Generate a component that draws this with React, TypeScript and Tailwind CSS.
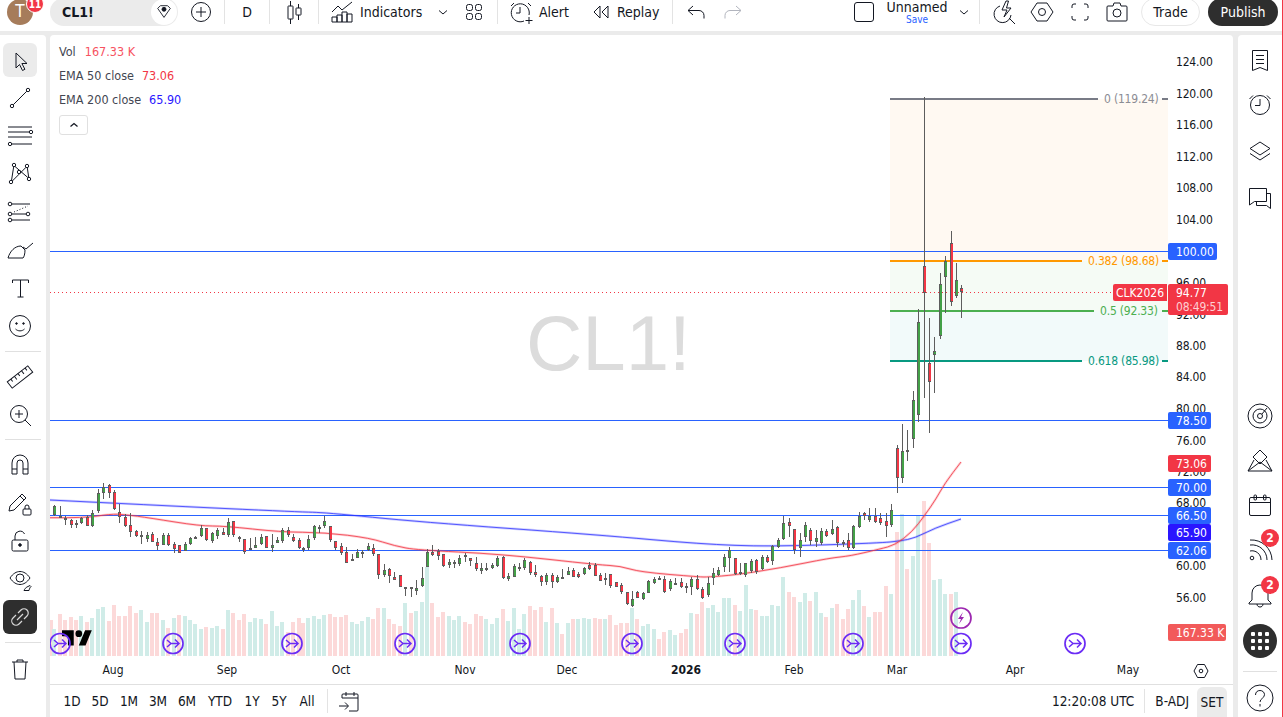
import React from "react";

type C = "g" | "r";
const A: [number, number, number, number, C][] = [
[505,506,515,516,"g"],[506,516,518,518,"r"],[516,518,519,525,"g"],[519,520,525,528,"r"],[520,523,525,528,"g"],[517,518,523,524,"g"],[515,517,526,526,"r"],[510,513,526,527,"g"],[489,493,511,513,"g"],[483,487,493,499,"g"],[484,485,493,498,"r"],[490,492,509,510,"r"],[504,512,517,523,"r"],[514,517,526,527,"r"],[513,525,532,537,"r"],[530,531,536,537,"r"],[531,535,536,544,"g"],[532,535,539,542,"g"],[532,534,542,542,"r"],[538,542,546,550,"r"],[533,535,545,545,"g"],[533,535,545,546,"r"],[542,544,549,553,"r"],[545,545,553,553,"r"],[542,544,551,551,"g"],[537,538,544,545,"g"],[536,537,538,539,"g"],[525,528,536,537,"g"],[528,528,540,541,"r"],[532,533,541,543,"g"],[528,530,536,539,"g"],[528,532,535,535,"r"],[518,522,535,537,"g"],[521,521,535,537,"r"],[536,537,539,542,"r"],[539,539,552,554,"r"],[538,548,550,550,"g"],[537,545,548,548,"g"],[534,537,544,545,"g"],[536,536,548,548,"r"],[534,545,548,552,"g"],[537,540,543,543,"g"],[528,530,541,543,"g"],[527,530,535,537,"r"],[534,537,541,542,"r"],[538,540,548,549,"r"],
];
const B: [number, number, number, number, number, C][] = [
[303,230,235,236,245,"g"],[308,195,208,235,240,"g"],[314,166,168,205,210,"g"],[319,165,172,174,190,"g"],[324,138,153,167,175,"g"],[330,168,168,210,215,"r"],[335,212,212,233,240,"r"],[341,220,228,248,255,"r"],[346,230,245,278,278,"r"],[352,253,268,272,273,"g"],[357,237,247,263,265,"g"],[362,240,245,246,265,"g"],[368,220,228,241,243,"g"],[373,222,235,253,258,"r"],[378,252,252,315,328,"r"],[384,283,300,314,320,"g"],[389,295,297,318,340,"r"],[394,305,322,329,330,"r"],[400,315,315,350,352,"r"],[405,350,352,353,378,"g"],[411,350,352,358,382,"r"],[416,330,355,362,375,"g"],[422,292,325,348,350,"g"],[427,238,247,290,292,"g"],[432,225,245,255,258,"r"],[438,238,243,257,270,"r"],[443,253,253,288,292,"r"],[449,268,277,285,293,"g"],[454,270,275,283,295,"g"],[459,255,265,281,288,"g"],[465,250,255,262,275,"r"],[470,264,265,274,288,"r"],[476,262,278,298,302,"r"],[481,280,294,302,313,"g"],[486,280,295,296,303,"g"],[492,280,286,294,298,"g"],[497,257,265,287,290,"g"],[503,258,260,325,327,"r"],[508,310,318,327,332,"g"],[514,282,287,320,322,"g"],[519,280,290,291,302,"g"],[524,265,270,295,300,"g"],[530,272,276,308,316,"r"],[535,285,305,315,320,"r"],[541,315,317,335,348,"r"],[546,310,315,335,345,"g"],[552,310,315,335,355,"r"],[557,315,320,335,338,"g"],[562,297,322,323,325,"g"],[568,290,303,314,316,"g"],[573,295,300,320,322,"r"],[578,305,313,321,325,"r"],[584,290,294,311,315,"g"],[589,275,285,297,300,"r"],[595,280,285,317,319,"r"],[600,308,315,332,334,"r"],[605,310,324,326,345,"g"],[610,312,312,348,355,"r"],[616,335,337,350,352,"r"],[621,340,345,365,372,"r"],[627,365,367,403,405,"r"],[632,363,388,407,410,"g"],[637,363,365,383,385,"r"],[643,365,370,388,390,"g"],[648,330,333,368,370,"g"],[654,322,327,338,342,"g"],[659,318,323,325,330,"g"],[664,318,327,365,368,"r"],[670,328,333,358,362,"g"],[675,325,338,342,345,"r"],[681,325,337,350,353,"r"],[686,338,349,351,368,"g"],[691,322,327,350,375,"g"],[697,315,327,357,360,"r"],[702,350,357,384,388,"r"],[708,320,340,375,382,"g"],[713,295,310,325,345,"g"],[718,290,300,315,318,"g"],[724,252,262,290,305,"g"],[729,232,240,263,305,"g"],[735,265,265,313,315,"r"],[740,280,305,307,315,"g"],[745,278,280,315,320,"g"],[751,268,273,302,310,"g"],[756,268,270,305,312,"r"],[762,255,262,297,300,"g"],[767,255,260,275,278,"r"],[772,225,228,272,284,"g"],[778,205,210,230,235,"g"],[783,138,160,207,210,"g"],[789,145,157,167,200,"r"],[794,177,177,240,253,"r"],[800,190,210,235,260,"g"],[805,155,165,200,215,"g"],[810,175,180,213,225,"r"],[816,180,205,215,232,"g"],[821,175,183,218,225,"g"],[826,178,183,197,200,"r"],[832,150,178,191,195,"g"],[837,168,171,220,232,"r"],[843,210,215,217,232,"g"],[848,190,210,235,240,"r"],[853,166,168,235,238,"g"],[859,125,137,172,175,"g"],[864,125,130,137,150,"r"],[869,113,138,150,155,"g"],[875,115,138,155,158,"r"],[880,130,145,160,165,"r"],[886,130,153,167,200,"r"],[891,102,120,165,170,"g"],
];
const D: [number, number, number, number, number, C][] = [
[897,445,448,478,493,"r"],[902,424,451,478,483,"g"],[907,430,450,451,461,"g"],[913,391,400,439,448,"g"],[918,309,322,415,422,"g"],[924,97,266,293,398,"r"],[929,318,363,382,433,"r"],[934,337,351,355,393,"g"],[940,273,284,336,339,"g"],[945,256,261,277,313,"g"],[951,231,243,302,306,"r"],[956,263,280,296,298,"g"],[961,285,288,292,318,"r"],
];
const toY = (z: number) => 470 + z / 3;
const candles = [
  ...A.map((c, i) => [Math.round(54.3 + 5.43 * i), c[0], c[1], c[2], c[3], c[4]] as const),
  ...B.map((c) => [c[0], toY(c[1]), toY(c[2]), toY(c[3]), toY(c[4]), c[5]] as const),
  ...D,
].map((c) => ({ x: c[0], h: Math.round(c[1]), t: Math.round(c[2]), b: Math.round(c[3]), l: Math.round(c[4]), c: c[5] as C }));

const volA: [number, C][] = [[627,"g"],[582,"r"],[600,"r"],[590,"r"],[600,"r"],[587,"g"],[605,"r"],[595,"g"],[567,"g"],[561,"g"],[603,"r"],[555,"r"],[588,"r"],[588,"r"],[558,"r"],[578,"r"],[570,"g"],[605,"g"],[579,"r"],[579,"r"],[600,"g"],[624,"r"],[595,"g"],[585,"r"],[588,"g"],[600,"g"],[613,"g"],[627,"g"],[621,"r"],[624,"g"],[618,"g"],[627,"r"],[570,"g"],[578,"r"],[600,"r"],[582,"r"],[606,"g"],[594,"g"],[597,"g"],[612,"r"],[573,"g"],[618,"g"],[606,"g"],[636,"r"],[606,"r"],[594,"r"]];
const volB: [number, number, C][] = [[303,460,"r"],[308,443,"g"],[314,437,"g"],[319,447,"g"],[324,435,"g"],[330,432,"r"],[335,441,"r"],[341,441,"r"],[346,435,"r"],[352,456,"g"],[357,461,"g"],[362,453,"g"],[368,441,"g"],[373,447,"r"],[378,414,"r"],[384,414,"g"],[389,447,"r"],[394,461,"r"],[400,468,"r"],[405,399,"g"],[411,428,"r"],[416,423,"g"],[422,396,"g"],[427,290,"g"],[432,399,"r"],[438,441,"r"],[443,426,"r"],[449,438,"g"],[454,450,"g"],[459,438,"g"],[465,456,"r"],[470,461,"r"],[476,432,"r"],[481,438,"r"],[486,447,"g"],[492,462,"g"],[497,444,"g"],[503,417,"r"],[508,453,"g"],[514,414,"g"],[519,477,"g"],[524,432,"g"],[530,408,"r"],[535,420,"r"],[541,411,"r"],[546,456,"g"],[552,414,"r"],[557,459,"g"],[562,492,"r"],[568,459,"g"],[573,447,"r"],[578,447,"g"],[584,444,"g"],[589,447,"g"],[595,444,"r"],[600,447,"r"],[605,447,"g"],[610,435,"r"],[616,465,"r"],[621,459,"r"],[627,459,"r"],[632,414,"g"],[637,447,"r"],[643,468,"g"],[648,462,"g"],[654,477,"g"],[659,507,"r"],[664,486,"r"],[670,480,"g"],[675,495,"g"],[681,489,"r"],[686,477,"r"],[691,429,"g"],[697,432,"r"],[702,396,"r"],[708,414,"g"],[713,405,"g"],[718,426,"g"],[724,384,"g"],[729,384,"g"],[735,405,"r"],[740,423,"g"],[746,345,"g"],[751,417,"g"],[756,420,"r"],[762,438,"g"],[767,438,"g"],[772,405,"g"],[778,408,"g"],[783,321,"g"],[789,366,"r"],[794,381,"r"],[800,396,"g"],[805,369,"g"],[810,393,"r"],[816,366,"g"],[821,429,"g"],[826,441,"r"],[832,414,"g"],[837,402,"r"],[843,447,"r"],[848,417,"r"],[853,390,"g"],[859,360,"g"],[864,408,"r"],[869,441,"g"],[875,426,"r"]];
const volC: [number, number, C][] = [[880,365,"r"],[886,288,"r"],[891,312,"g"],[897,126,"r"],[902,72,"g"],[907,237,"r"],[913,198,"g"],[918,78,"g"],[924,33,"r"],[929,159,"r"],[934,270,"g"],[940,267,"g"],[945,312,"g"],[951,312,"r"],[956,306,"g"]];
const vols = [
  { x: 49, y: 620, c: "r" as C },
  ...volA.map((v, i) => ({ x: Math.round(54.3 + 5.43 * i), y: 420 + v[0] / 3, c: v[1] })),
  ...volB.map((v) => ({ x: v[0], y: toY(v[1]), c: v[2] })),
  ...volC.map((v) => ({ x: v[0], y: 490 + v[1] / 3, c: v[2] })),
];

function smooth(p: [number, number][]) {
  let d = `M${p[0][0]} ${p[0][1]}`;
  for (let i = 1; i < p.length - 1; i++) {
    const mx = (p[i][0] + p[i + 1][0]) / 2;
    const my = (p[i][1] + p[i + 1][1]) / 2;
    d += ` Q${p[i][0]} ${p[i][1]} ${mx} ${my}`;
  }
  const l = p[p.length - 1];
  return d + ` L${l[0]} ${l[1]}`;
}
const ema50 = smooth([[50,517.7],[85,518],[110,514],[125,514.5],[150,518],[200,526],[225,526],[280,532],[325,532.5],[370,538],[395,546],[417,550],[500,554],[600,565],[620,566],[640,572],[700,577],[708,577],[735,575],[780,568],[830,558],[850,556],[880,549],[895,545],[912,532],[925,515],[936,499],[945,483],[961,462]]);
const ema200 = smooth([[50,500],[150,505],[300,512],[325,512.5],[420,522],[600,535],[700,544],[770,546.7],[880,543],[900,541],[915,538],[935,528],[961,519]]);

const priceTicks: [string, number][] = [["124.00",62],["120.00",94],["116.00",125],["112.00",157],["108.00",188],["104.00",220],["96.00",283],["92.00",315],["88.00",346],["84.00",377],["80.00",409],["76.00",441],["72.00",472],["68.00",503],["60.00",566],["56.00",598]];
const timeTicks: [string, number, boolean][] = [["Aug",113,false],["Sep",227,false],["Oct",341,false],["Nov",465,false],["Dec",567,false],["2026",686,true],["Feb",794,false],["Mar",897,false],["Apr",1015,false],["May",1128,false]];
const hLevels = [251, 420, 487, 515, 550];
const tags: [string, number, number, string][] = [["100.00",243,49,"bg-[#2962ff]"],["78.50",412,43,"bg-[#2962ff]"],["73.06",455,43,"bg-[#f23645]"],["70.00",479,43,"bg-[#2962ff]"],["66.50",507,43,"bg-[#2962ff]"],["65.90",524,43,"bg-[#2a16ff]"],["62.06",542,43,"bg-[#2962ff]"],["167.33 K",624,58,"bg-[#f25a5a]"]];
const fibs: [string, number, number, number, string, string][] = [
  ["0 (119.24)",99,1098,1104,"#787b86","text-[#8a8c94]"],
  ["0.382 (98.68)",261,1082,1088,"#ff9800","text-[#ff9800]"],
  ["0.5 (92.33)",311,1094,1100,"#4caf50","text-[#4caf50]"],
  ["0.618 (85.98)",361,1082,1088,"#089981","text-[#089981]"],
];
const arrows = [60, 173, 292, 405, 520, 632, 735, 853, 961, 1075];
const ranges = [["1D",28],["5D",28],["1M",30],["3M",28],["6M",30],["YTD",36],["1Y",28],["5Y",26],["All",30]] as const;

function Ic({ children, className = "" }: { children: React.ReactNode; className?: string }) {
  return (
    <svg width="28" height="28" viewBox="0 0 28 28" fill="none" stroke="currentColor" strokeWidth="1" className={"shrink-0 " + className}>
      {children}
    </svg>
  );
}

const left: { k: string; n: React.ReactNode }[] = [
  { k: "cursor", n: <path d="M10 7v15l3.500-3.500 3 6 2.400-1.200-3-5.800H21z" /> },
  { k: "line", n: <><circle cx="6" cy="22" r="1.700" /><circle cx="22" cy="6" r="1.700" /><path d="M7.200 20.800 20.800 7.200" /></> },
  { k: "hl", n: <><path d="M2 5h24M2 10h21M2 15h24M6 22h20" /><circle cx="25" cy="10" r="1.700" /><circle cx="4" cy="22" r="1.700" /></> },
  { k: "pat", n: <><circle cx="5" cy="22" r="1.700" /><circle cx="8" cy="5" r="1.700" /><circle cx="13" cy="12" r="1.700" /><circle cx="21" cy="6" r="1.700" /><circle cx="23" cy="19" r="1.700" /><path d="M5.500 20.500 7.700 6.700M9 6.500l12.800 11M20 7.300 6.300 21M21.300 7.700 22.700 17.300" /></> },
  { k: "fork", n: <><circle cx="4" cy="6" r="1.800" /><circle cx="4" cy="16" r="1.800" /><circle cx="4" cy="22" r="1.800" /><circle cx="22" cy="16" r="1.800" /><path d="M6 6h18M6 16h14M6 22h18" /><path d="M8 14 22 8" strokeDasharray="1 2" /></> },
  { k: "brush", n: <><path d="M2 22h15M2 22C4 15 9 10 15 10l4 4c0 4-1 7-2 8" /><path d="M17 11l3 2 7-6" /></> },
  { k: "text", n: <path d="M7 9V6h16v3M15 6v17M12 23h6" transform="translate(-.5 0)" /> },
  { k: "smile", n: <><circle cx="14" cy="14" r="10.500" /><circle cx="10.500" cy="11.500" r=".8" fill="currentColor" /><circle cx="17.500" cy="11.500" r=".8" fill="currentColor" /><path d="M9.500 17c2.500 2.500 6.500 2.500 9 0" /></> },
  { k: "sep1", n: null },
  { k: "ruler", n: <g transform="rotate(-38 14 14)"><rect x="1" y="10" width="26" height="8" /><path d="M5.500 10v3M10 10v4M14.500 10v3M19 10v4M23.500 10v3" /></g> },
  { k: "zoom", n: <><circle cx="13" cy="13" r="8.500" /><path d="M13 9v8M9 13h8M19 19l6 6" /></> },
  { k: "sep2", n: null },
  { k: "magnet", n: <path d="M6 23v-11a8 8 0 0 1 16 0v11h-5v-11a3 3 0 0 0-6 0v11zM6 18h5M17 18h5" /> },
  { k: "pencil", n: <><path d="M3 22l1-5 12-12 4 4-12 12zM14 7l4 4" /><rect x="17" y="20" width="8" height="6" rx="1" /><path d="M19 20v-2a2 2 0 0 1 4 0v2" /></> },
  { k: "lock", n: <><rect x="6" y="13" width="16" height="11" rx="1.500" /><path d="M9 13V9a5 5 0 0 1 9.500-2" /><circle cx="14" cy="18" r="1.300" fill="currentColor" /></> },
  { k: "eye", n: <><path d="M4 13c3-4.500 6.500-6.500 10-6.500S21 8.500 24 13c-3 4.500-6.500 6.500-10 6.500S7 17.500 4 13z" /><circle cx="14" cy="13" r="4" /><path d="M18 25.500h5c.5-2 1-3 2-4l-1-1-3 1.500c-1 .5-2.500 2-3 3.500z" /></> },
];

function LeftBar() {
  return (
    <div className="w-[46px] shrink-0 bg-white rounded-tr-[4px] flex flex-col pt-[6px] text-[#131722]">
      {left.map((it) =>
        it.n === null ? (
          <div key={it.k} className="h-[12.5px] flex items-center justify-center"><div className="w-[36px] h-px bg-[#e0e0e0]" /></div>
        ) : (
          <div key={it.k} className={"h-[34px] w-[34px] mx-[3px] my-[2px] flex items-center justify-center rounded-[6px] " + (it.k === "cursor" ? "bg-[#ebebeb]" : "")}>
            <Ic>{it.n}</Ic>
          </div>
        )
      )}
      <div className="h-[34px] w-[34px] mx-[3px] my-[2px] flex items-center justify-center rounded-[6px] bg-[#2e2e2e] text-[#d8d8d8]">
        <Ic><path d="M12 10l3-3a4 4 0 0 1 6 6l-3 3M16 18l-3 3a4 4 0 0 1-6-6l3-3M11 17l6-6" strokeWidth="1.200" /></Ic>
      </div>
      <div className="h-[12.5px] flex items-center justify-center"><div className="w-[36px] h-px bg-[#e0e0e0]" /></div>
      <div className="h-[34px] w-[34px] mx-[3px] my-[2px] flex items-center justify-center">
        <Ic><path d="M6 8h16M11 8V6h6v2M8 8l1 17h10l1-17" /></Ic>
      </div>
    </div>
  );
}

function Sep() {
  return <div className="w-px h-[24px] bg-[#e3e3e3] shrink-0" />;
}

function TopBar() {
  return (
    <div className="h-[31px] shrink-0 bg-white flex items-center pb-[7px] text-[14px] text-[#131722] whitespace-nowrap">
      <div className="relative ml-[7px] w-[26px] h-[26px] shrink-0 rounded-full bg-[#a67c5b] flex items-center justify-center text-white text-[17px]">
        T
        <div className="absolute left-[19px] -top-[4px] w-[18px] h-[18px] rounded-full bg-[#f23645] border border-white flex items-center justify-center text-[10px] font-bold">11</div>
      </div>
      <div className="ml-[17px] w-[128px] h-[28px] shrink-0 rounded-full bg-[#ebebeb] flex items-center justify-between pl-[12px] pr-[1px]">
        <span className="font-bold">CL1!</span>
        <div className="w-[26px] h-[26px] rounded-full bg-white flex items-center justify-center">
          <Ic className="scale-[.9]"><path d="M7 10l3-3h8l3 3-7 10z" /><circle cx="14" cy="11" r="2.200" fill="currentColor" /></Ic>
        </div>
      </div>
      <div className="w-[46px] flex justify-center shrink-0">
        <Ic><circle cx="14" cy="14" r="9.500" /><path d="M14 9v10M9 14h10" /></Ic>
      </div>
      <Sep />
      <div className="w-[44px] text-center shrink-0">D</div>
      <Sep />
      <div className="w-[48px] flex justify-center shrink-0">
        <Ic><path d="M10.500 3v5M10.500 21v5M18.500 6v4M18.500 17v5" /><rect x="8" y="8" width="5" height="13" rx=".5" /><rect x="16" y="10" width="5" height="7" rx=".5" /></Ic>
      </div>
      <Sep />
      <div className="ml-[10px] shrink-0 w-[28px]">
        <Ic><path d="M3 14l6-6 4 4 10-8" /><path d="M3 24v-5h5v5zM8 24v-7h5v7zM13 24v-10h5v10zM18 24v-8h5v8z" /></Ic>
      </div>
      <span className="ml-[3px] w-[61px] shrink-0">Indicators</span>
      <svg width="16" height="16" viewBox="0 0 16 16" fill="none" stroke="currentColor" className="ml-[14px] shrink-0"><path d="M4 6.500l4 3.500 4-3.500" /></svg>
      <div className="ml-[9px] w-[28px] shrink-0">
        <Ic><rect x="6.500" y="6.500" width="6" height="6" rx="2" /><rect x="15.500" y="6.500" width="6" height="6" rx="2" /><rect x="6.500" y="15.500" width="6" height="6" rx="2" /><rect x="15.500" y="15.500" width="6" height="6" rx="2" /></Ic>
      </div>
      <div className="ml-[9px]"><Sep /></div>
      <div className="ml-[9px] w-[28px] shrink-0">
        <Ic><path d="M17 23a9 9 0 1 1 5-6M13 9v6h-4M4 8l3-3M24 8l-3-3M22 19v7M18.500 22.500h7" /></Ic>
      </div>
      <span className="ml-[4px] w-[31px] shrink-0">Alert</span>
      <div className="ml-[17px] w-[28px] shrink-0">
        <Ic><path d="M13 8l-6 6 6 6zM21 8l-6 6 6 6z" /></Ic>
      </div>
      <span className="ml-[2px] w-[41px] shrink-0">Replay</span>
      <div className="ml-[14px]"><Sep /></div>
      <div className="ml-[9px] w-[28px] shrink-0">
        <Ic><path d="M11 8l-5 4.500 5 4.500M6 12.500h11a5 5 0 0 1 5 5v3" /></Ic>
      </div>
      <div className="ml-[9px] w-[28px] shrink-0 text-[#b2b5be]">
        <Ic><path d="M17 8l5 4.500-5 4.500M22 12.500H11a5 5 0 0 0-5 5v3" /></Ic>
      </div>
      <div className="flex-1" />
      <div className="w-[20px] h-[20px] rounded-[3px] border border-[#131722] shrink-0" />
      <div className="ml-[14px] w-[58px] shrink-0 flex flex-col items-center">
        <span className="text-[14px] leading-[15px]">Unnamed</span>
        <span className="text-[10px] leading-[10px] text-[#2962ff]">Save</span>
      </div>
      <svg width="16" height="16" viewBox="0 0 16 16" fill="none" stroke="currentColor" className="ml-[10px] shrink-0"><path d="M4 6.500l4 3.500 4-3.500" /></svg>
      <div className="ml-[7px]"><Sep /></div>
      <div className="ml-[10px] w-[28px] shrink-0">
        <Ic><path d="M10 8a8.500 8.500 0 1 0 11 9M19 20l6 6" /><path d="M16 3l-4 9h5l-3 7 7-9h-4.500l2-7z" /></Ic>
      </div>
      <div className="ml-[10px] w-[28px] shrink-0">
        <Ic><path d="M9 5h10l6 9-6 9H9l-6-9z" /><circle cx="14" cy="14" r="3.500" /></Ic>
      </div>
      <div className="ml-[10px] w-[28px] shrink-0">
        <Ic><path d="M10 6H8a2 2 0 0 0-2 2v2M18 6h2a2 2 0 0 1 2 2v2M10 22H8a2 2 0 0 1-2-2v-2M18 22h2a2 2 0 0 0 2-2v-2" /></Ic>
      </div>
      <div className="ml-[9px] w-[28px] shrink-0">
        <Ic><path d="M5 8h5l1-3h6l1 3h5a1 1 0 0 1 1 1v13a1 1 0 0 1-1 1H5a1 1 0 0 1-1-1V9a1 1 0 0 1 1-1z" /><circle cx="14" cy="15" r="4" /></Ic>
      </div>
      <div className="ml-[10px] w-[59px] h-[28px] shrink-0 rounded-full border border-[#e8e8e8] flex items-center justify-center">Trade</div>
      <div className="ml-[8px] mr-[4px] w-[70px] h-[28px] shrink-0 rounded-full bg-[#2e2e2e] text-white flex items-center justify-center">Publish</div>
    </div>
  );
}

function ChartSvg() {
  return (
    <svg width="1183" height="650" viewBox="50 35 1183 650" className="absolute left-0 top-0">
      <g shapeRendering="crispEdges">
        <rect x="890" y="99" width="278" height="162" fill="#fff9f2" />
        <rect x="890" y="261" width="278" height="50" fill="#f5fbf5" />
        <rect x="890" y="311" width="278" height="50" fill="#f2fafa" />
        {vols.map((v, i) => (
          <rect key={i} x={Math.max(50, v.x - 2)} y={v.y} width={v.x < 52 ? 3 : 4} height={656 - v.y} fill={v.c === "g" ? "#d0ece8" : "#fcd9d9"} />
        ))}
        {hLevels.map((y) => <rect key={y} x="50" y={y} width="1118" height="1" fill="#2962ff" />)}
        {fibs.map((f) => (
          <g key={f[0]}>
            <rect x="890" y={f[1] - 1} width={f[2] - 890} height="2" fill={f[4]} />
            <rect x="1162" y={f[1] - 1} width="6" height="2" fill={f[4]} />
          </g>
        ))}
      </g>
      <line x1="50" y1="292.500" x2="1113" y2="292.500" stroke="#f23645" strokeDasharray="1 3" />
      <path d={ema200} fill="none" stroke="#2a2eff" strokeOpacity=".22" strokeWidth="2.500" />
      <path d={ema200} fill="none" stroke="#2a2eff" strokeOpacity=".75" strokeWidth="1" />
      <path d={ema50} fill="none" stroke="#f23645" strokeOpacity=".22" strokeWidth="2.500" />
      <path d={ema50} fill="none" stroke="#f23645" strokeOpacity=".8" strokeWidth="1" />
      <g shapeRendering="crispEdges">
        {candles.map((c, i) => (
          <g key={i}>
            <rect x={c.x} y={c.h} width="1" height={Math.max(1, c.l - c.h)} fill="#5d5d5d" />
            <rect x={c.x - 1} y={c.t} width="3" height={Math.max(2, c.b - c.t)} fill="#5d5d5d" />
            {c.b - c.t > 2 && <rect x={c.x} y={c.t + 1} width="2" height={c.b - c.t - 2} fill={c.c === "g" ? "#43a047" : "#f23645"} />}
          </g>
        ))}
      </g>
      <g transform="translate(62 627) scale(.84)">
        <path d="M14 22H7V11H0V4h14v18zM28 22h-8l7.500-18h8L28 22z" fill="#000" />
        <circle cx="20" cy="8" r="4" fill="#000" />
      </g>
      {arrows.map((x) => (
        <g key={x} fill="none" stroke="#6b2cf5">
          <circle cx={x} cy="643.500" r="10" strokeWidth="1.700" />
          <path d={`M${x - 6} ${640}l4 3.500-4 3.500M${x - 2} 643.500h8M${x + 2} 639.500l4 4-4 4`} strokeWidth="1.500" />
        </g>
      ))}
      <g fill="none">
        <circle cx="961" cy="618" r="10" stroke="#9c27b0" strokeWidth="1.700" />
        <path d="M963 612l-5 7h3l-2 5 5-7h-3z" fill="#9c27b0" />
      </g>
      <g fill="none" stroke="#131722">
        <path d="M1197.500 664.500h7l3.500 6.500-3.500 6.500h-7l-3.500-6.500z" />
        <circle cx="1201" cy="671" r="1.800" />
      </g>
    </svg>
  );
}

function Chart() {
  return (
    <div className="relative flex-1 overflow-hidden text-[12px] text-[#131722]">
      <div className="absolute left-[476px] top-[262px] font-['Liberation_Sans',sans-serif] text-[78px] leading-[92px] text-[#dcdcdc] whitespace-nowrap">CL1!</div>
      <ChartSvg />
      <div className="absolute left-[9px] top-[5px] flex flex-col text-[#434651] text-[12.5px] leading-[24px] whitespace-nowrap">
        <div className="flex gap-[9px]"><span>Vol</span><span className="text-[#f7525f]">167.33 K</span></div>
        <div className="flex gap-[8px]"><span>EMA 50 close</span><span className="text-[#f23645]">73.06</span></div>
        <div className="flex gap-[8px]"><span>EMA 200 close</span><span className="text-[#2a16ff]">65.90</span></div>
        <div className="mt-[3px] w-[29px] h-[20px] rounded-[3px] border border-[#e0e0e0] bg-white flex items-center justify-center">
          <svg width="12" height="12" viewBox="0 0 12 12" fill="none" stroke="#131722" strokeWidth="1.300"><path d="M2.500 7.500 6 4.500l3.500 3" /></svg>
        </div>
      </div>
      {fibs.map((f) => (
        <div key={f[0]} className={"absolute whitespace-nowrap leading-[16px] tracking-[-.2px] " + f[5]} style={{ left: f[3] - 50, top: f[1] - 35 - 8 }}>{f[0]}</div>
      ))}
      {priceTicks.map(([t, y]) => (
        <div key={t} className="absolute left-[1126px] leading-[16px] tracking-[-.2px]" style={{ top: y - 35 - 8 }}>{t}</div>
      ))}
      {timeTicks.map(([t, x, b]) => (
        <div key={t} className={"absolute top-[627px] w-[50px] text-center leading-[16px] " + (b ? "font-bold" : "")} style={{ left: x - 50 - 25 }}>{t}</div>
      ))}
      {tags.map(([t, y, w, bg]) => (
        <div key={t + y} className={"absolute left-[1118px] h-[17px] pl-[8px] rounded-[2px] text-white flex items-center leading-none whitespace-nowrap " + bg} style={{ top: y - 35, width: w }}>{t}</div>
      ))}
      <div className="absolute left-[1063px] top-[249px] w-[54px] h-[17px] rounded-l-[2px] bg-[#f23645] text-white flex items-center justify-center leading-none">CLK2026</div>
      <div className="absolute left-[1118px] top-[249px] w-[60px] h-[31px] pl-[8px] rounded-[2px] bg-[#f23645] text-white flex flex-col items-start justify-center leading-[14px]">
        <span>94.77</span>
        <span className="text-[#fdd0d4] tracking-[-.2px]">08:49:51</span>
      </div>
    </div>
  );
}

function BottomBar() {
  return (
    <div className="h-[33px] shrink-0 border-t border-[#e0e0e0] flex items-center text-[13.5px] text-[#131722] whitespace-nowrap pl-[8px]">
      {ranges.map(([t, w]) => (
        <div key={t} className="text-center shrink-0" style={{ width: w }}>{t}</div>
      ))}
      <div className="ml-[5px] w-px h-[24px] bg-[#e3e3e3]" />
      <div className="ml-[7px]">
        <Ic><path d="M7 11V8a1 1 0 0 1 1-1h14a1 1 0 0 1 1 1v15a1 1 0 0 1-1 1h-8M7 11h16M11 5v4M19 5v4M4 19h9M10 15.500 13.500 19 10 22.500" /></Ic>
      </div>
      <div className="flex-1" />
      <span>12:20:08 UTC</span>
      <div className="ml-[10px] w-px h-[24px] bg-[#e3e3e3]" />
      <span className="ml-[10px]">B-ADJ</span>
      <div className="ml-[8px] mr-[6px] w-[30px] h-[30px] mt-[2px] rounded-t-[6px] bg-[#ebebeb] flex items-center justify-center">SET</div>
    </div>
  );
}

function Badge({ top }: { top: number }) {
  return (
    <div className="absolute left-[23px] w-[18px] h-[18px] rounded-full bg-[#f23645] text-white text-[12px] font-bold flex items-center justify-center leading-none" style={{ top }}>2</div>
  );
}

function RightBar() {
  return (
    <div className="flex-1 bg-white rounded-tl-[4px] flex flex-col items-center pt-[3px] text-[#131722]">
      <div className="h-[44px] flex items-center">
        <Ic><path d="M6.500 4.500h15v20l-7.500-3-7.500 3zM10 9.500h8M10 13.500h8M10 17.500h8" /></Ic>
      </div>
      <div className="h-[44px] flex items-center">
        <Ic><circle cx="14" cy="15" r="9.500" /><path d="M14 9v6.500H9M3.500 9 7 5.500M24.500 9 21 5.500" /></Ic>
      </div>
      <div className="h-[50px] flex items-center">
        <Ic><path d="M14 5l10 6.500L14 18 4 11.500zM4 16.500 14 23l10-6.500" /></Ic>
      </div>
      <div className="h-[44px] flex items-center">
        <Ic><path d="M3.500 4.500h17v13h-12l-5 3.500zM20.500 9.500h4v15l-4-3H10.500V17.500" /></Ic>
      </div>
      <div className="flex-1" />
      <div className="h-[44px] flex items-center">
        <Ic><circle cx="14" cy="14" r="12" /><circle cx="14" cy="14" r="7" /><circle cx="14" cy="14" r="2.500" /><path d="M15.800 12.200 21 6" /></Ic>
      </div>
      <div className="h-[45px] flex items-center">
        <Ic><path d="M14 3l7 7-7 7-7-7zM8 13l-6 11h24l-6-11M2 24l12-9 12 9" /></Ic>
      </div>
      <div className="h-[44px] flex items-center">
        <Ic><path d="M5 6.500h18a1.500 1.500 0 0 1 1.500 1.500v15a1.500 1.500 0 0 1-1.500 1.500H5A1.500 1.500 0 0 1 3.500 23V8A1.500 1.500 0 0 1 5 6.500zM3.500 11.500h21" /><rect x="8" y="4" width="2.500" height="5" rx="1" /><rect x="17.500" y="4" width="2.500" height="5" rx="1" /></Ic>
      </div>
      <div className="relative h-[44px] w-full flex items-center justify-center">
        <Ic><circle cx="6" cy="23" r="1.800" /><path d="M4 16a9 9 0 0 1 11 9M4 10a15 15 0 0 1 17 15M4 5a20.500 20.500 0 0 1 22 20" /></Ic>
        <Badge top={2} />
      </div>
      <div className="relative h-[48px] w-full flex items-center justify-center">
        <Ic><path d="M14 4a8 8 0 0 0-8 8v7l-3 3v1h22v-1l-3-3v-7a8 8 0 0 0-8-8zM11 23c0 2 1.500 3 3 3s3-1 3-3" /></Ic>
        <Badge top={5} />
      </div>
      <div className="h-[44px] flex items-center">
        <div className="w-[34px] h-[34px] rounded-full bg-[#2e2e2e] grid grid-cols-3 gap-[3px] p-[8px]">
          {Array.from({ length: 9 }).map((_, i) => <div key={i} className="bg-white rounded-[1px]" />)}
        </div>
      </div>
      <div className="h-[16px] w-full flex items-center justify-center"><div className="w-[34px] h-px bg-[#e0e0e0]" /></div>
      <div className="h-[38px] flex items-center">
        <Ic><circle cx="14" cy="14" r="13" /><path d="M9.500 11c0-3 2-4.500 4.500-4.500s4.500 1.800 4.500 4.200c0 3.500-4.500 3.800-4.500 7.300M14 20v2.500" /></Ic>
      </div>
    </div>
  );
}

export default function App() {
  return (
    <div className="w-[1283px] h-[717px] overflow-hidden bg-[#ebebeb] border-r border-[#f23645] flex flex-col font-['DejaVu_Sans_Condensed','DejaVu_Sans',sans-serif]">
      <TopBar />
      <div className="flex-1 flex mt-[4px] min-h-0">
        <LeftBar />
        <div className="w-[1183px] ml-[4px] mr-[5px] bg-white rounded-t-[4px] flex flex-col shrink-0">
          <Chart />
          <BottomBar />
        </div>
        <RightBar />
      </div>
    </div>
  );
}
